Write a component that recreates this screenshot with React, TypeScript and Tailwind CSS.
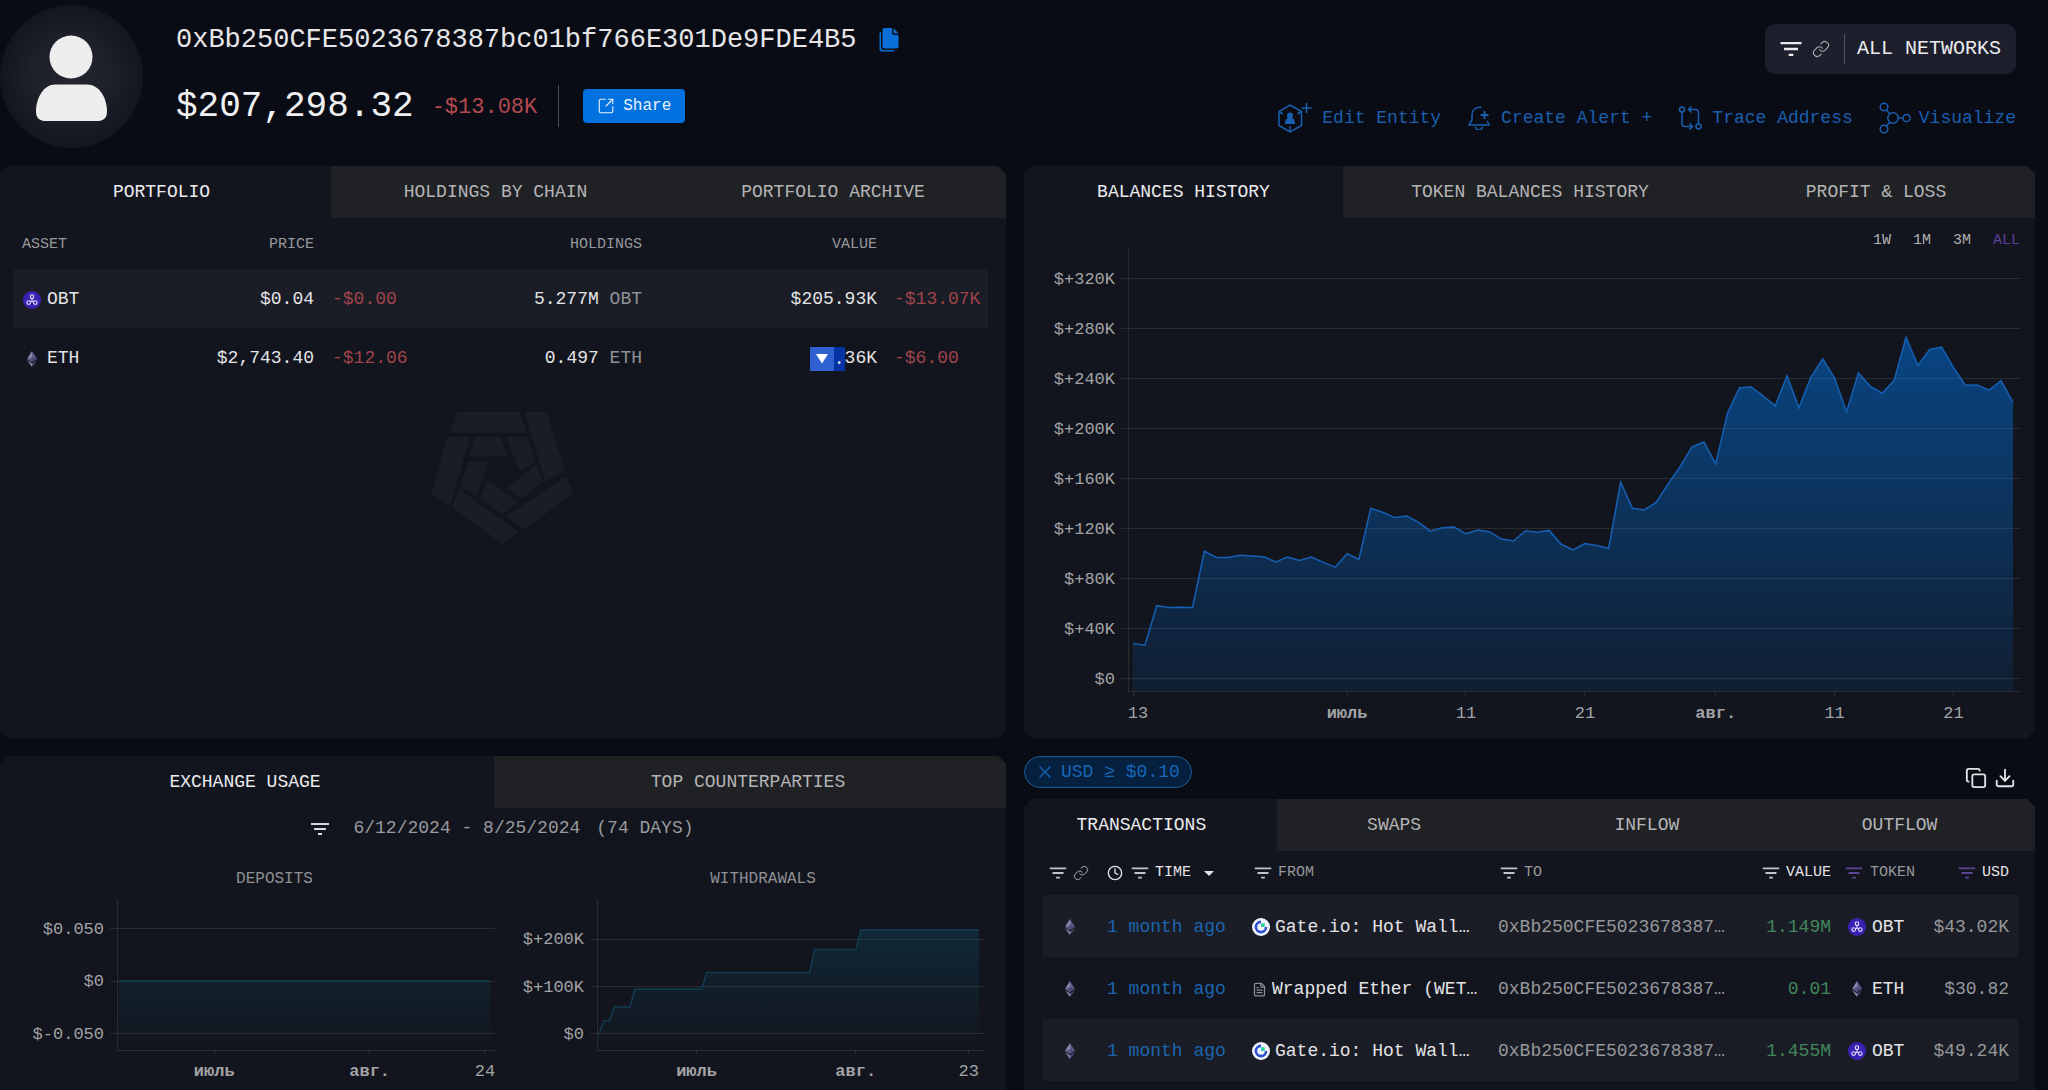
import React, { useState } from 'react';
import { Clock, Copy, Download, FileText, Link as LinkIcon, SquareArrowOutUpRight, X } from 'lucide-react';
import { MdArrowDropDown, MdFilterList } from 'react-icons/md';

const ADDRESS = '0xBb250CFE5023678387bc01bf766E301De9FDE4B5';

interface AxisTick {
  value: number;
  label: string;
}

interface DateTick {
  day: number;
  label: string;
  bold?: boolean;
  shift?: number;
}

interface Transaction {
  from: string;
  source: 'gate' | 'contract';
  value: string;
  token: 'OBT' | 'ETH';
  usd: string;
}

// Daily balance in thousands of USD, starting 6/12/2024
const balances = [
  28.3, 27, 58.6, 57.1, 57.4, 57.1, 102.2, 97.1, 97.1, 98.9, 98.3, 97.7, 93.5, 97.4, 94.7, 97.4, 93.2, 89.3, 100.1,
  95.6, 136.5, 133.2, 129, 130.2, 125.3, 118.1, 120.8, 121.4, 116, 119, 117.5, 111.8, 110.3, 118.4, 117.2, 118.7,
  107.6, 103.1, 108.2, 106.7, 104.3, 157.2, 136.5, 135, 141, 156, 169.5, 185.2, 189.4, 171.9, 212.8, 232.7, 233.3,
  226, 218.2, 242.3, 216.7, 241.1, 255.8, 240.5, 213.4, 244.4, 233.9, 228.4, 238.4, 273, 250.7, 263.3, 265.1, 248.9,
  234.8, 235, 230.8, 238.4, 220.9,
];

const balancePoints = balances.map((value, day): [number, number] => [day, value]);

const withdrawalPoints: [number, number][] = [
  [0, 0], [1, 28], [2, 28], [3, 57], [6, 57], [7, 95], [20, 95], [21, 130], [41, 130], [42, 179], [50, 179], [51, 220],
  [74, 220],
];

const balanceTicks: AxisTick[] = [320, 280, 240, 200, 160, 120, 80, 40, 0].map((value) => ({
  value,
  label: value === 0 ? '$0' : `$+${value}K`,
}));

const transactions: Transaction[] = [
  { from: 'Gate.io: Hot Wall…', source: 'gate', value: '1.149M', token: 'OBT', usd: '$43.02K' },
  { from: 'Wrapped Ether (WET…', source: 'contract', value: '0.01', token: 'ETH', usd: '$30.82' },
  { from: 'Gate.io: Hot Wall…', source: 'gate', value: '1.455M', token: 'OBT', usd: '$49.24K' },
];

const EthIcon: React.FC = () => (
  <svg width="18" height="18" viewBox="0 0 18 18" className="shrink-0" aria-hidden="true">
    <path d="M9 1 4 9l5 3z" fill="#8a86ad" />
    <path d="M9 1l5 8-5 3z" fill="#625d8c" />
    <path d="M4 10.2 9 17v-3.6z" fill="#8a86ad" />
    <path d="M14 10.2 9 17v-3.6z" fill="#544f7c" />
    <path d="M4 9l5-2 5 2-5 3z" fill="#3d3963" opacity="0.6" />
  </svg>
);

const ObtIcon: React.FC = () => (
  <svg width="18" height="18" viewBox="0 0 18 18" className="shrink-0" aria-hidden="true">
    <circle cx="9" cy="9" r="9" fill="#3a20b4" />
    <g fill="none" stroke="#e2dffa" strokeWidth="1.1">
      <rect x="7.4" y="4" width="3.2" height="3.4" rx="0.8" />
      <circle cx="5.7" cy="11.6" r="1.8" />
      <circle cx="12.3" cy="11.6" r="1.8" />
      <path d="M9 7.4v2.4M7.2 11.2 9 9.8l1.800 1.400" />
    </g>
  </svg>
);

const GateIcon: React.FC = () => (
  <svg width="18" height="18" viewBox="0 0 18 18" className="shrink-0" aria-hidden="true">
    <circle cx="9" cy="9" r="9" fill="#f1f4fb" />
    <path d="M9 3.9A5.1 5.1 0 1 0 14.1 9" fill="none" stroke="#2b4fd0" strokeWidth="2.6" />
    <path d="M9 5.2h3.8V9H9z" fill="#2fd3a0" />
  </svg>
);

const CopyFilledIcon: React.FC = () => (
  <svg width="20" height="24" viewBox="0 0 20 24" aria-hidden="true">
    <path
      d="M2 4v16a2 2 0 0 0 2 2h11v1.5H3A2.5 2.5 0 0 1 .5 21V5.5A1.5 1.5 0 0 1 2 4z"
      fill="#0b6fd8"
    />
    <path
      d="M5.500 0H13v4.500A2.500 2.500 0 0 0 15.500 7H19.500v11.500a2 2 0 0 1-2 2h-12a2 2 0 0 1-2-2V2a2 2 0 0 1 2-2z"
      fill="#0b6fd8"
    />
    <path d="M14.500 0l5 5.500H16a1.500 1.500 0 0 1-1.500-1.500z" fill="#0b6fd8" />
  </svg>
);

const EntityIcon: React.FC = () => (
  <svg width="34" height="32" viewBox="0 0 34 32" fill="none" stroke="currentColor" strokeWidth="1.5" aria-hidden="true">
    <path d="M12 3l11.500 6.500v14L12 30 1 23.500v-14z" />
    <path d="M1 9.500l4 2.500M23.500 9.500l-4 2.500M12 30v-6" />
    <circle cx="12" cy="13.500" r="3" fill="currentColor" stroke="none" />
    <path d="M7 22c0-4.500 2-6.500 5-6.500s5 2 5 6.500z" fill="currentColor" stroke="none" />
    <path d="M28.500 1v10M23.500 6h10" />
  </svg>
);

const AlertIcon: React.FC = () => (
  <svg width="24" height="24" viewBox="0 0 24 24" fill="none" stroke="currentColor" strokeWidth="1.5" aria-hidden="true">
    <path d="M14.500 1.500C8.500.500 5 4 5 9v5l-3 4.500V19h20v-.500L20 15" />
    <path d="M8.500 20.500a3.500 3.500 0 0 0 7 0" />
    <path d="M17.500 5v8M13.500 9h8" strokeWidth="2" />
  </svg>
);

const TraceIcon: React.FC = () => (
  <svg width="24" height="24" viewBox="0 0 24 24" fill="none" stroke="currentColor" strokeWidth="1.5" aria-hidden="true">
    <circle cx="4" cy="3.5" r="2.5" />
    <circle cx="20.5" cy="20.5" r="2.5" />
    <path d="M4 6v11.500a3 3 0 0 0 3 3h6M11.500 17.500l3 3-3 3" />
    <path d="M20.500 18V6.500a3 3 0 0 0-3-3h-6M13.500.500l-3 3 3 3" />
  </svg>
);

const VisualizeIcon: React.FC = () => (
  <svg width="32" height="32" viewBox="0 0 32 32" fill="none" stroke="currentColor" strokeWidth="1.5" aria-hidden="true">
    <circle cx="14" cy="16" r="5.2" />
    <circle cx="5" cy="5" r="3.8" />
    <circle cx="5" cy="27" r="3.8" />
    <circle cx="27.5" cy="16" r="3.6" />
    <path d="M7.500 8l3.500 4M7.500 24l3.500-4M19.200 16h4.700" />
  </svg>
);

const Watermark: React.FC = () => (
  <svg width="144" height="136" viewBox="31 58 432 408" fill="#1a1d26" aria-hidden="true">
    <path d="M112 64H300L322 126H92z" />
    <path d="M315 64H380L436 238 376 272z" />
    <path d="M84 138H152L92 344 34 310z" />
    <path d="M165 138H242L262 198H148z" />
    <path d="M260 138H324L348 212 300 242z" />
    <path d="M148 212H206L172 314 120 286z" />
    <path d="M118 294 296 424 248 460 98 350z" />
    <path d="M205 268 298 332 248 370 182 324z" />
    <path d="M350 222 370 272 306 324 262 292z" />
    <path d="M440 256 460 308 316 416 258 378z" />
  </svg>
);

interface AreaChartProps {
  id: string;
  title: string;
  width: number;
  height: number;
  axisX: number;
  plotLeft: number;
  plotRight: number;
  gridRight: number;
  plotBottom: number;
  labelRight: number;
  labelY: number;
  yMin: number;
  yMax: number;
  points: [number, number][];
  yTicks: AxisTick[];
  xTicks: DateTick[];
  line: string;
  fill: string;
  fillFrom: number;
  fillTo: number;
}

const LAST_DAY = 74;

const AreaChart: React.FC<AreaChartProps> = (props) => {
  const { axisX, plotLeft, plotRight, plotBottom, gridRight, yMin, yMax, points } = props;
  const x = (day: number) => plotLeft + (day / LAST_DAY) * (plotRight - plotLeft);
  const y = (value: number) => plotBottom * (1 - (value - yMin) / (yMax - yMin));
  const path = points.map(([day, value]) => `${x(day).toFixed(1)},${y(value).toFixed(1)}`).join(' L');

  return (
    <svg viewBox={`0 0 ${props.width} ${props.height}`} className="block w-full" role="img" aria-label={props.title}>
      <defs>
        <linearGradient id={props.id} x1="0" y1="0" x2="0" y2="1">
          <stop offset="0" stopColor={props.fill} stopOpacity={props.fillFrom} />
          <stop offset="1" stopColor={props.fill} stopOpacity={props.fillTo} />
        </linearGradient>
      </defs>
      <path d={`M${path} L${plotRight},${plotBottom} L${plotLeft},${plotBottom}Z`} fill={`url(#${props.id})`} />
      <g stroke="#8f8c88" strokeOpacity="0.19" strokeWidth="1" shapeRendering="crispEdges">
        <path d={`M${axisX} 0V${plotBottom}H${gridRight}`} fill="none" />
        {props.yTicks.map((tick) => (
          <path key={tick.label} d={`M${axisX - 7} ${y(tick.value)}H${gridRight}`} />
        ))}
        {props.xTicks.map((tick) => (
          <path key={tick.day} d={`M${x(tick.day)} ${plotBottom}v5`} />
        ))}
      </g>
      <path d={`M${path}`} fill="none" stroke={props.line} strokeWidth="1.5" />
      <g fill="#a3a3a6" fontSize="17">
        {props.yTicks.map((tick) => (
          <text key={tick.label} x={props.labelRight} y={y(tick.value) + 5} textAnchor="end">
            {tick.label}
          </text>
        ))}
        {props.xTicks.map((tick) => (
          <text
            key={tick.day}
            x={x(tick.day) + (tick.shift ?? 0)}
            y={props.labelY}
            textAnchor="middle"
            fontWeight={tick.bold ? 700 : 400}
          >
            {tick.label}
          </text>
        ))}
      </g>
    </svg>
  );
};

interface TabBarProps {
  tabs: string[];
  columns: string;
}

const TabBar: React.FC<TabBarProps> = ({ tabs, columns }) => {
  const [active, setActive] = useState(0);
  return (
    <div role="tablist" className={`grid h-[52px] shrink-0 text-[18px] ${columns}`}>
      {tabs.map((tab, index) => (
        <button
          key={tab}
          role="tab"
          aria-selected={index === active}
          onClick={() => setActive(index)}
          className={index === active ? 'text-[#ececee]' : 'bg-[#202124] text-[#b4b4b7]'}
        >
          {tab}
        </button>
      ))}
    </div>
  );
};

const FilterButton: React.FC<{ label: string; active?: boolean }> = ({ label, active }) => (
  <button aria-label={label} className={active ? 'text-[#5d4596]' : 'text-[#c4c4c8]'}>
    <MdFilterList size={22} />
  </button>
);

const panelCut =
  'bg-[#12151e] [clip-path:polygon(8px_0,calc(100%-8px)_0,100%_8px,100%_calc(100%-8px),calc(100%-8px)_100%,8px_100%,0_calc(100%-8px),0_8px)]';
const panelCutTop = 'bg-[#12151e] [clip-path:polygon(8px_0,calc(100%-8px)_0,100%_8px,100%_100%,0_100%,0_8px)]';

const Header: React.FC = () => (
  <header className="flex items-start justify-between pt-[5px] pb-[18px]">
    <div className="flex gap-[33px]">
      <div className="h-[143px] w-[143px] rounded-full bg-[radial-gradient(circle,#23252f_0%,#1d1f29_40%,#12151e_72%)]">
        <svg viewBox="0 0 143 143" fill="#eeeeee" role="img" aria-label="Unknown entity">
          <circle cx="71" cy="52" r="21.5" />
          <path d="M55 79.500h32c12 0 20 13 20 27 0 7-4 9.500-10 9.500H46c-6 0-10-2.500-10-9.500 0-14 8-27 19-27z" />
        </svg>
      </div>
      <div className="flex flex-col gap-[23px] pt-[13px]">
        <div className="flex h-[44px] items-center gap-[22px]">
          <h1 className="text-[27px] text-[#e6e6e8]">{ADDRESS}</h1>
          <button aria-label="Copy address">
            <CopyFilledIcon />
          </button>
        </div>
        <div className="flex h-[42px] items-center">
          <span className="pt-[2px] text-[36px] text-[#f0f0f2]">$207,298.32</span>
          <span className="ml-[18px] pt-[2px] text-[22px] text-[#b44a4f]">-$13.08K</span>
          <span className="ml-[21px] h-[42px] w-px bg-[#4b4c52]" />
          <button className="ml-[24px] flex h-[34px] items-center gap-[8px] rounded-[4px] bg-[#0071de] px-[14px] text-[16px] text-[#e8f2fd]">
            <SquareArrowOutUpRight size={18} strokeWidth={1.5} />
            Share
          </button>
        </div>
      </div>
    </div>

    <div className="flex flex-col items-end gap-[28px] pt-[19px] pr-[32px]">
      <button className="flex h-[50px] items-center rounded-[10px] bg-[#1e1f2d] pr-[15px] pl-[12px] text-[20px] text-[#ececee]">
        <MdFilterList size={28} />
        <LinkIcon size={18} strokeWidth={1.5} className="ml-[7px] text-[#a9a9ae]" />
        <span className="mr-[12px] ml-[14px] h-[30px] w-px bg-[#55565f]" />
        ALL NETWORKS
      </button>
      <nav className="flex items-center gap-[26px] text-[18px] text-[#1a5fae]">
        <a href="#edit" className="flex h-[32px] items-center gap-[10px]">
          <EntityIcon />
          Edit Entity
        </a>
        <a href="#alert" className="flex h-[32px] items-center gap-[10px]">
          <AlertIcon />
          Create Alert +
        </a>
        <a href="#trace" className="flex h-[32px] items-center gap-[10px]">
          <TraceIcon />
          Trace Address
        </a>
        <a href="#visualize" className="flex h-[32px] items-center gap-[8px]">
          <VisualizeIcon />
          Visualize
        </a>
      </nav>
    </div>
  </header>
);

const Portfolio: React.FC = () => (
  <section className={panelCut}>
    <TabBar
      tabs={['PORTFOLIO', 'HOLDINGS BY CHAIN', 'PORTFOLIO ARCHIVE']}
      columns="grid-cols-[331fr_337fr_338fr] [&>button]:pr-[8px]"
    />
    <div className="pr-[18px] pl-[14px]">
      <table className="w-full table-fixed text-[18px]">
        <colgroup>
          <col className="w-[130px]" />
          <col className="w-[170px]" />
          <col className="w-[115px]" />
          <col className="w-[213px]" />
          <col className="w-[235px]" />
          <col className="w-[111px]" />
        </colgroup>
        <thead>
          <tr className="h-[51px] text-[15px] text-[#97989b] [&>th]:pt-[4px] [&>th]:font-normal">
            <th className="pl-[8px] text-left">ASSET</th>
            <th className="text-right">PRICE</th>
            <td></td>
            <th className="text-right">HOLDINGS</th>
            <th className="text-right">VALUE</th>
            <td></td>
          </tr>
        </thead>
        <tbody className="text-[#e4e4e6] [&_td]:pt-[2px]">
          <tr className="h-[59px] bg-[#1a1d26]">
            <td className="pl-[9px]">
              <a href="#obt" className="flex items-center gap-[6px]">
                <ObtIcon />
                OBT
              </a>
            </td>
            <td className="text-right">$0.04</td>
            <td className="pl-[18px] text-[#a0444b]">-$0.00</td>
            <td className="text-right">
              5.277M <span className="text-[#919295]">OBT</span>
            </td>
            <td className="text-right">$205.93K</td>
            <td className="pl-[17px] text-[#a0444b]">-$13.07K</td>
          </tr>
          <tr className="h-[59px]">
            <td className="pl-[9px]">
              <a href="#eth" className="flex items-center gap-[6px]">
                <EthIcon />
                ETH
              </a>
            </td>
            <td className="text-right">$2,743.40</td>
            <td className="pl-[18px] text-[#a0444b]">-$12.06</td>
            <td className="text-right">
              0.497 <span className="text-[#919295]">ETH</span>
            </td>
            <td>
              <div className="flex h-[24px] items-center justify-end">
                <button
                  aria-label="Selection menu"
                  className="flex h-[24px] w-[24px] items-center justify-center bg-[#2f62d0]"
                >
                  <svg width="12" height="10" viewBox="0 0 12 10" fill="#ffffff" aria-hidden="true">
                    <path d="M0 0h12L6 9.500z" />
                  </svg>
                </button>
                <span className="h-[24px] bg-[#0434a4] leading-[24px]">.</span>36K
              </div>
            </td>
            <td className="pl-[17px] text-[#a0444b]">-$6.00</td>
          </tr>
        </tbody>
      </table>
    </div>
    <div className="mt-[23px] flex justify-center pr-[2px]">
      <Watermark />
    </div>
  </section>
);

const BalancesHistory: React.FC = () => {
  const [range, setRange] = useState('ALL');
  return (
    <section className={panelCut}>
      <TabBar
        tabs={['BALANCES HISTORY', 'TOKEN BALANCES HISTORY', 'PROFIT & LOSS']}
        columns="grid-cols-[319fr_374fr_318fr]"
      />
      <div className="flex h-[31px] items-end justify-end gap-[22px] pr-[15px] text-[15px] leading-[16px]">
        {['1W', '1M', '3M', 'ALL'].map((item) => (
          <button
            key={item}
            onClick={() => setRange(item)}
            className={item === range ? 'text-[#5b3f95]' : 'text-[#b0b0b3]'}
          >
            {item}
          </button>
        ))}
      </div>
      <AreaChart
        id="balances"
        title="Balances history"
        width={1011}
        height={489}
        axisX={104}
        plotLeft={109}
        plotRight={989}
        gridRight={996}
        plotBottom={442}
        labelRight={91}
        labelY={469}
        yMin={-9.6}
        yMax={343.6}
        points={balancePoints}
        yTicks={balanceTicks}
        xTicks={[
          { day: 0, label: '13', shift: 5 },
          { day: 18, label: 'июль', bold: true },
          { day: 28, label: '11' },
          { day: 38, label: '21' },
          { day: 49, label: 'авг.', bold: true },
          { day: 59, label: '11' },
          { day: 69, label: '21' },
        ]}
        line="#1560b4"
        fill="#0072e0"
        fillFrom={0.52}
        fillTo={0.1}
      />
    </section>
  );
};

const ExchangeUsage: React.FC = () => (
  <section className={panelCutTop}>
    <TabBar
      tabs={['EXCHANGE USAGE', 'TOP COUNTERPARTIES']}
      columns="grid-cols-[494fr_512fr] [&>button]:pr-[4px]"
    />
    <button className="mx-auto flex h-[41px] items-center pr-[4px] text-[18px] text-[#9a9a9d]">
      <MdFilterList size={24} className="text-[#d8d8dc]" />
      <span className="ml-[21px]">6/12/2024 - 8/25/2024</span>
      <span className="ml-[16px]">(74 DAYS)</span>
    </button>
    <div className="grid grid-cols-2 text-[16px] text-[#8f9093]">
      <div>
        <h2 className="h-[50px] pt-[18px] pl-[46px] text-center">DEPOSITS</h2>
        <AreaChart
          id="deposits"
          title="Deposits"
          width={503}
          height={190}
          axisX={117}
          plotLeft={119}
          plotRight={490}
          gridRight={495}
          plotBottom={151}
          labelRight={104}
          labelY={177}
          yMin={-0.0657}
          yMax={0.0781}
          points={[[0, 0], [LAST_DAY, 0]]}
          yTicks={[
            { value: 0.05, label: '$0.050' },
            { value: 0, label: '$0' },
            { value: -0.05, label: '$-0.050' },
          ]}
          xTicks={[
            { day: 19, label: 'июль', bold: true },
            { day: 50, label: 'авг.', bold: true },
            { day: 73, label: '24' },
          ]}
          line="#123c52"
          fill="#0d3f52"
          fillFrom={0.3}
          fillTo={0}
        />
      </div>
      <div>
        <h2 className="h-[50px] pt-[18px] pl-[17px] text-center">WITHDRAWALS</h2>
        <AreaChart
          id="withdrawals"
          title="Withdrawals"
          width={503}
          height={190}
          axisX={94}
          plotLeft={96}
          plotRight={476}
          gridRight={481}
          plotBottom={151}
          labelRight={81}
          labelY={177}
          yMin={-33.9}
          yMax={285.7}
          points={withdrawalPoints}
          yTicks={[
            { value: 200, label: '$+200K' },
            { value: 100, label: '$+100K' },
            { value: 0, label: '$0' },
          ]}
          xTicks={[
            { day: 19, label: 'июль', bold: true },
            { day: 50, label: 'авг.', bold: true },
            { day: 72, label: '23' },
          ]}
          line="#123c52"
          fill="#0d3f52"
          fillFrom={0.45}
          fillTo={0}
        />
      </div>
    </div>
  </section>
);

const Transactions: React.FC = () => (
  <div className="flex flex-col">
    <div className="flex h-[43px] items-start justify-between pr-[19px]">
      <button className="flex h-[32px] items-center gap-[6px] rounded-full border border-[#1c5a96] bg-[#06203f] pr-[11px] pl-[10px] text-[18px] text-[#1766b8]">
        <X size={20} strokeWidth={1.5} />
        USD ≥ $0.10
      </button>
      <div className="flex gap-[7px] pt-[11px] text-[#e2e2e4]">
        <button aria-label="Copy table">
          <Copy size={22} strokeWidth={2} />
        </button>
        <button aria-label="Download table">
          <Download size={22} strokeWidth={2} />
        </button>
      </div>
    </div>
    <section className={`flex-1 pb-[8px] ${panelCutTop}`}>
      <TabBar tabs={['TRANSACTIONS', 'SWAPS', 'INFLOW', 'OUTFLOW']} columns="grid-cols-4 [&>button]:pr-[18px]" />
      <div className="pr-[17px] pl-[19px]">
        <table className="w-full table-fixed text-[18px]">
          <colgroup>
            <col className="w-[64px]" />
            <col className="w-[145px]" />
            <col className="w-[246px]" />
            <col className="w-[242px]" />
            <col className="w-[91px]" />
            <col className="w-[99px]" />
            <col className="w-[88px]" />
          </colgroup>
          <thead>
            <tr className="h-[44px] text-[15px] text-[#97989b] [&_th]:font-normal">
              <th aria-label="Chain">
                <div className="flex items-center gap-[4px] pl-[4px]">
                  <FilterButton label="Filter by chain" />
                  <LinkIcon size={16} strokeWidth={1.5} className="text-[#a9a9ae]" />
                </div>
              </th>
              <th>
                <div className="flex items-center text-[#e4e4e6]">
                  <Clock size={16} strokeWidth={2} className="mr-[6px] shrink-0" />
                  <FilterButton label="Filter by time" />
                  <button className="ml-[4px] flex items-center gap-[6px]">
                    TIME
                    <MdArrowDropDown size={24} />
                  </button>
                </div>
              </th>
              <th>
                <div className="flex items-center gap-[4px]">
                  <FilterButton label="Filter by sender" />
                  FROM
                </div>
              </th>
              <th>
                <div className="flex items-center gap-[4px]">
                  <FilterButton label="Filter by receiver" />
                  TO
                </div>
              </th>
              <th>
                <div className="flex items-center justify-end gap-[4px] text-[#e4e4e6]">
                  <FilterButton label="Filter by value" />
                  VALUE
                </div>
              </th>
              <th>
                <div className="flex items-center gap-[5px] pl-[12px]">
                  <FilterButton label="Filter by token" active />
                  TOKEN
                </div>
              </th>
              <th>
                <div className="flex items-center justify-end gap-[4px] pr-[9px] text-[#e4e4e6]">
                  <FilterButton label="Filter by USD" active />
                  USD
                </div>
              </th>
            </tr>
          </thead>
          <tbody className="[&_td]:pt-[2px]">
            {transactions.map((tx, index) => (
              <tr key={index} className="h-[62px] odd:bg-[#1a1d26]">
                <td>
                  <div className="flex justify-center pr-[10px]">
                    <EthIcon />
                  </div>
                </td>
                <td>
                  <a href="#tx" className="text-[#1c65ae]">
                    1 month ago
                  </a>
                </td>
                <td>
                  <a href="#from" className="flex items-center gap-[5px] whitespace-nowrap text-[#e4e4e6]">
                    {tx.source === 'gate' ? (
                      <GateIcon />
                    ) : (
                      <FileText size={15} strokeWidth={2} className="shrink-0 text-[#8d8e92]" />
                    )}
                    {tx.from}
                  </a>
                </td>
                <td className="text-[#97989b]">
                  <a href="#to">0xBb250CFE5023678387…</a>
                </td>
                <td className="text-right text-[#42855a]">{tx.value}</td>
                <td>
                  <a href="#token" className="flex items-center gap-[6px] pl-[17px] text-[#e4e4e6]">
                    {tx.token === 'OBT' ? <ObtIcon /> : <EthIcon />}
                    {tx.token}
                  </a>
                </td>
                <td className="pr-[9px] text-right text-[#97989b]">{tx.usd}</td>
              </tr>
            ))}
          </tbody>
        </table>
      </div>
    </section>
  </div>
);

const App: React.FC = () => {
  return (
    <div className="flex min-h-screen flex-col bg-[#090c15] font-['Liberation_Mono','DejaVu_Sans_Mono',monospace]">
      <Header />
      <main className="grid flex-1 grid-cols-[1006fr_1011fr] grid-rows-[auto_1fr] gap-[18px] pr-[13px]">
        <Portfolio />
        <BalancesHistory />
        <ExchangeUsage />
        <Transactions />
      </main>
    </div>
  );
};

export default App;
